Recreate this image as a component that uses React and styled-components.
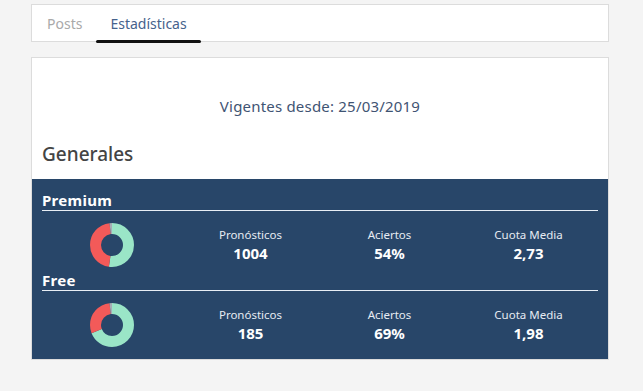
import React from "react";
import styled, {createGlobalStyle} from "styled-components";

/* STYLED COMPONENTS USED FOR THE PAGE.*/

const GlobalStyle = createGlobalStyle`
    body {
        margin: 0;
        background: #f4f4f4;
        font-family: "Noto Sans", "Open Sans", sans-serif;
    }
`

const Page = styled.div`
    width: 578px;
    margin-left: 31px;
    padding-top: 4px;
    display: flex;
    flex-direction: column;
    gap: 15px;
`

const TabBar = styled.div`
    height: 36px;
    background: white;
    border: 1px solid #dcdcdc;
    display: flex;
    align-items: stretch;
    padding-left: 1px;
`

const Tab = styled.div`
    position: relative;
    padding: 0 14px;
    display: flex;
    align-items: center;
    font-size: 14px;
    color: ${props => props.$active ? "#46628c" : "#a9a9a9"};
    &:after {
        content: "";
        display: ${props => props.$active ? "block" : "none"};
        position: absolute;
        left: 0;
        right: 0;
        bottom: -2px;
        height: 3px;
        border-radius: 2px;
        background: #111;
    }
`

const Card = styled.div`
    background: white;
    border: 1px solid #dcdcdc;
    display: flex;
    flex-direction: column;
`

const Since = styled.div`
    text-align: center;
    font-size: 15px;
    letter-spacing: 0.2px;
    color: #3f5473;
    margin-top: 38px;
    line-height: 20px;
`

const Title = styled.div`
    font-size: 19px;
    font-weight: 500;
    color: #444;
    margin: 26px 0 0 10px;
    line-height: 24px;
    height: 37px;
`

const Band = styled.div`
    background: #284669;
    padding: 13px 10px 0;
    height: 180px;
    box-sizing: border-box;
`

const Heading = styled.div`
    color: white;
    font-weight: bold;
    font-size: 15px;
    letter-spacing: 0.3px;
    line-height: 16px;
    padding-bottom: 2px;
    border-bottom: 1px solid #e8eef5;
`

const Row = styled.div`
    height: 61px;
    padding-top: 7px;
    box-sizing: border-box;
    display: grid;
    grid-template-columns: repeat(4, 1fr);
    align-items: center;
    justify-items: center;
`

const Stat = styled.div`
    display: flex;
    flex-direction: column;
    align-items: center;
    color: white;
`

const Label = styled.div`
    font-size: 11.5px;
    line-height: 14px;
    color: #e6ebf2;
`

const Value = styled.div`
    font-size: 15px;
    font-weight: bold;
    line-height: 18px;
    margin-top: 2px;
`

const Donut = ({win}) => {
    const c = 2 * Math.PI * 16.5
    const gray = 0.025
    const lose = 1 - win - gray
    return (
        <svg width="44" height="44" viewBox="0 0 44 44">
            <g transform="rotate(-90 22 22)" fill="none" strokeWidth="11">
                <circle cx="22" cy="22" r="16.5" stroke="#9ae5c7"
                        strokeDasharray={`${win * c} ${c}`}/>
                <circle cx="22" cy="22" r="16.5" stroke="#f35a59"
                        strokeDasharray={`${lose * c} ${c}`} strokeDashoffset={-win * c}/>
                <circle cx="22" cy="22" r="16.5" stroke="#a7adb5"
                        strokeDasharray={`${gray * c} ${c}`} strokeDashoffset={-(win + lose) * c}/>
            </g>
        </svg>
    )
}

const groups = [
    {name: "Premium", win: 0.52, total: "1004", hits: "54%", odds: "2,73"},
    {name: "Free", win: 0.685, total: "185", hits: "69%", odds: "1,98"},
]

export default function App() {
    return (
        <>
            <GlobalStyle/>
            <Page>
                <TabBar>
                    <Tab>Posts</Tab>
                    <Tab $active>Estadísticas</Tab>
                </TabBar>
                <Card>
                    <Since>Vigentes desde: 25/03/2019</Since>
                    <Title>Generales</Title>
                    <Band>
                        {groups.map(g => (
                            <div key={g.name}>
                                <Heading>{g.name}</Heading>
                                <Row>
                                    <Donut win={g.win}/>
                                    <Stat><Label>Pronósticos</Label><Value>{g.total}</Value></Stat>
                                    <Stat><Label>Aciertos</Label><Value>{g.hits}</Value></Stat>
                                    <Stat><Label>Cuota Media</Label><Value>{g.odds}</Value></Stat>
                                </Row>
                            </div>
                        ))}
                    </Band>
                </Card>
            </Page>
        </>
    )
}
